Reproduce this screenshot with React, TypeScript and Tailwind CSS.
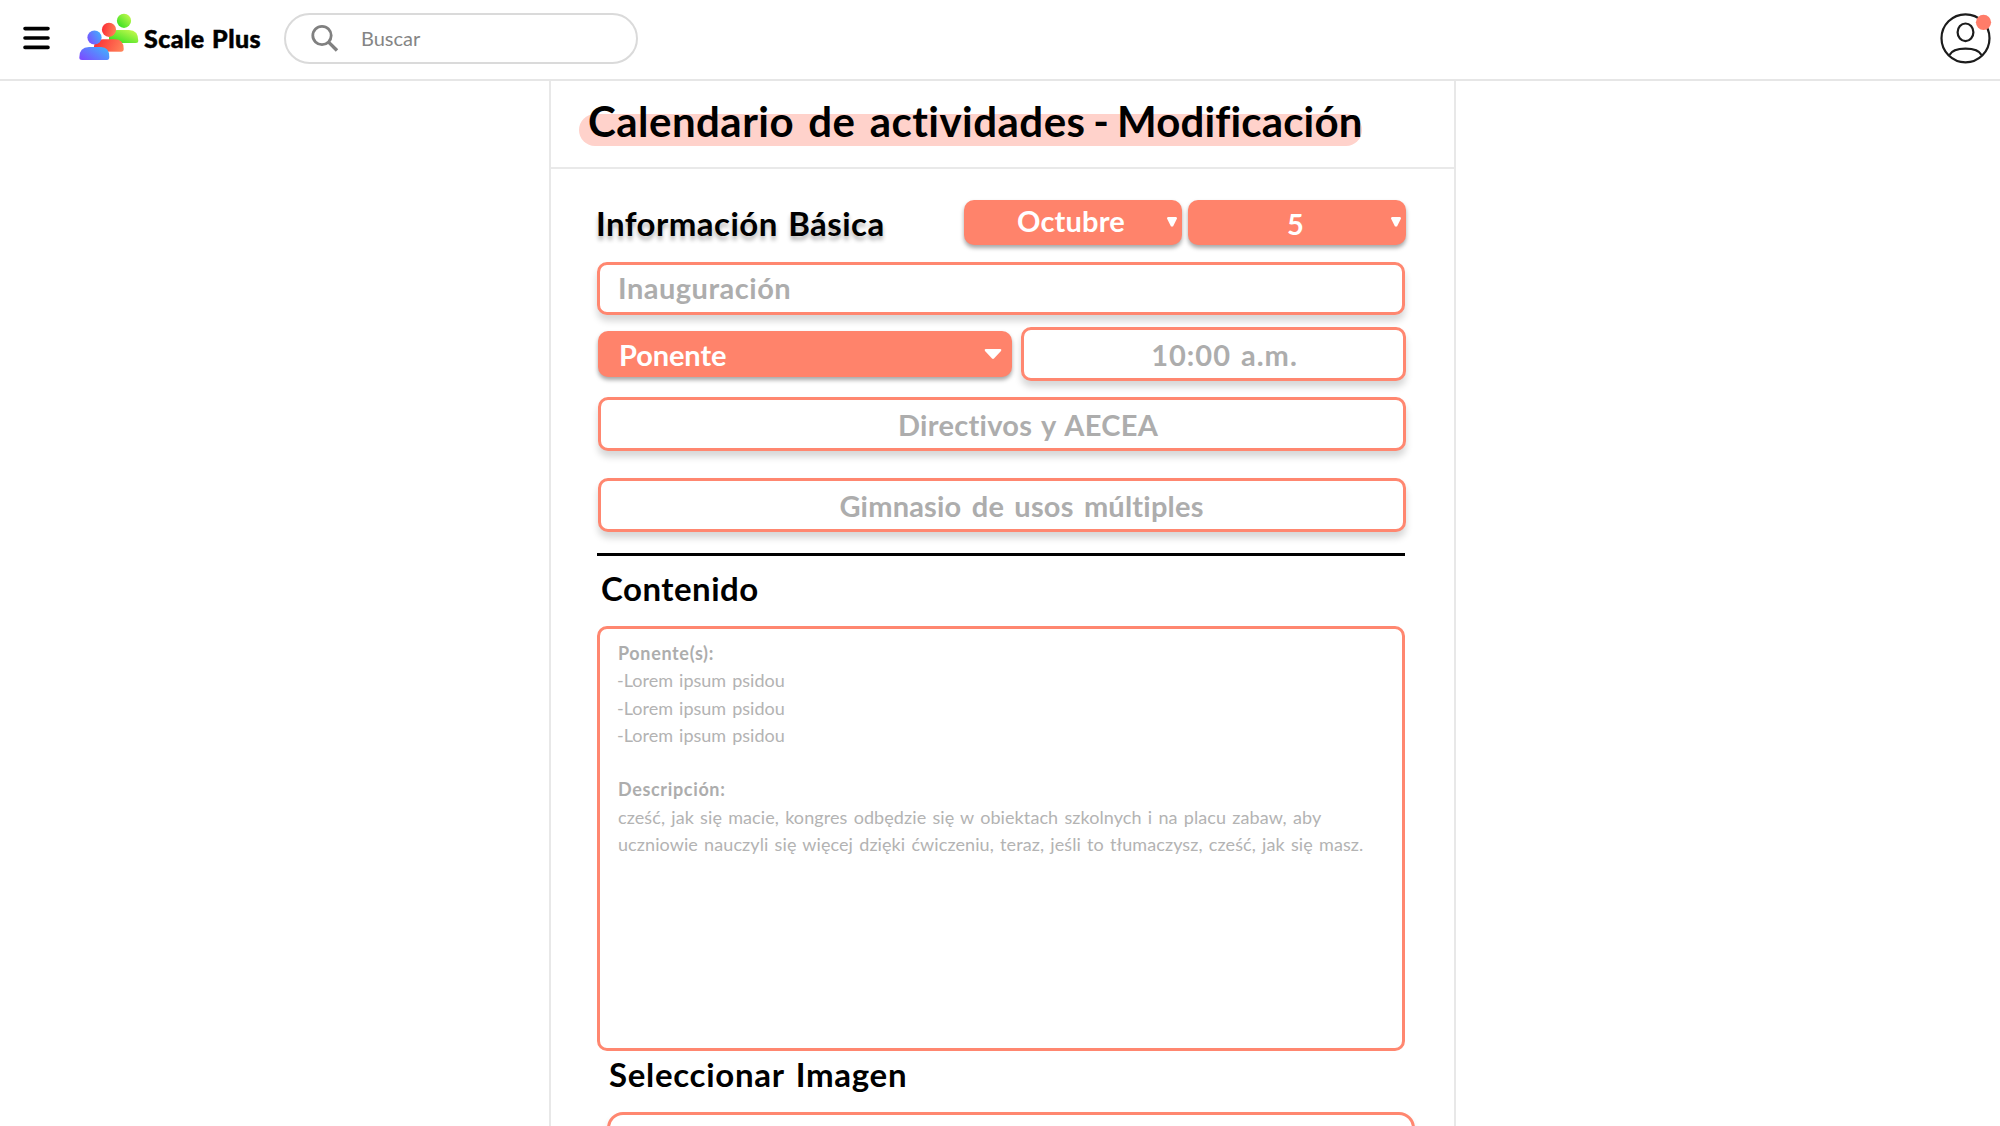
import type { ReactNode } from "react";

const field =
  "flex items-center rounded-[10px] border-[3px] border-[#ff8770] bg-white text-[29px] font-bold leading-[36px] text-[#adadad] shadow-[0_6px_7px_rgba(0,0,0,0.16)]";
const select =
  "relative flex items-center rounded-[10px] bg-[#ff836b] text-[29px] font-bold leading-[36px] text-white shadow-[0_3px_4px_rgba(0,0,0,0.35)]";
const heading = "text-[33px] font-bold leading-[40px] text-black";

function MenuIcon() {
  return (
    <svg className="ml-[23px] h-[24px] w-[27px]" viewBox="0 0 27 24" stroke="#000" strokeWidth="3.6" strokeLinecap="round">
      <path d="M2 2.6H25M2 12H25M2 21.4H25" />
    </svg>
  );
}

function Logo() {
  return (
    <svg className="ml-[29px] h-[48px] w-[60px]" viewBox="0 0 60 48">
      <defs>
        <linearGradient id="green" x1="0" y1="1" x2="1" y2="0">
          <stop offset="0" stopColor="#22dd1c" />
          <stop offset="1" stopColor="#d3fb52" />
        </linearGradient>
        <linearGradient id="red" x1="0" y1="0.4" x2="1" y2="0.6">
          <stop offset="0" stopColor="#fb2e36" />
          <stop offset="1" stopColor="#ff8258" />
        </linearGradient>
        <linearGradient id="blue" x1="0" y1="0.8" x2="1" y2="0.2">
          <stop offset="0" stopColor="#7b4dff" />
          <stop offset="1" stopColor="#42b0fd" />
        </linearGradient>
      </defs>
      <circle cx="45" cy="7.8" r="7.1" fill="url(#green)" />
      <path d="M30 30V24Q31 17 38 17H50Q59.300 17 59.300 28Q59.300 30 57 30Z" fill="url(#green)" />
      <circle cx="30" cy="16.800" r="7.100" fill="url(#red)" />
      <path d="M15 38.500V33Q16 26.300 24 26.300H36Q44.700 26.300 44.700 36Q44.700 38.700 42 38.700Z" fill="url(#red)" />
      <circle cx="15.500" cy="24.500" r="7.100" fill="url(#blue)" />
      <path d="M0.300 44.500Q0.300 34 10 34H22Q30.300 34 30.300 44Q30.300 47 28 47H3Q0.300 47 0.300 44.500Z" fill="url(#blue)" />
    </svg>
  );
}

function SearchIcon() {
  return (
    <svg className="ml-[24px] h-[30px] w-[30px]" viewBox="0 0 30 30" fill="none" stroke="#808080">
      <circle cx="12" cy="12.500" r="9.200" strokeWidth="2.800" />
      <path d="M18.600 19.100L27 27.500" strokeWidth="3.400" />
    </svg>
  );
}

function Avatar() {
  return (
    <svg className="mr-[8px] h-[52px] w-[54px]" viewBox="0 0 54 52" fill="none" stroke="#1c1c1c" strokeWidth="2.200">
      <circle cx="27.500" cy="26.300" r="24" />
      <ellipse cx="27.500" cy="20.300" rx="7.900" ry="8.800" />
      <path d="M11.500 43Q14.500 36.600 27.500 36.600T43.500 43" />
      <circle cx="45.500" cy="10.300" r="7.600" fill="#ff7c69" stroke="none" />
    </svg>
  );
}

function SmallCaret() {
  return (
    <svg className="absolute right-[5px] top-[17px] h-[10px] w-[10px]" viewBox="0 0 10 10" fill="#fff">
      <path d="M0.600 0H9.400L10 1.500L6 9.500H4L0 1.500Z" />
    </svg>
  );
}

function Line({ bold, tight, children }: { bold?: boolean; tight?: boolean; children?: ReactNode }) {
  const style = bold
    ? "font-bold tracking-[0.650px]"
    : tight
      ? "-ml-px text-[#b3b3b3] tracking-[0px] [word-spacing:1.500px]"
      : "text-[#b3b3b3] tracking-[0.085px] [word-spacing:1.500px]";
  return <p className={"h-[27.300px] whitespace-pre " + style}>{children}</p>;
}

export default function App() {
  return (
    <div className="flex h-[1126px] w-[2000px] flex-col overflow-hidden bg-white font-['Lato',sans-serif]">
      <header className="flex h-[81px] shrink-0 items-start border-b-2 border-[#e6e6e6]">
        <div className="flex h-[76px] w-full items-center">
          <MenuIcon />
          <div className="-mt-[3px]">
            <Logo />
          </div>
          <span className="ml-[5px] w-[136px] whitespace-nowrap text-[25px] font-black leading-[30px] tracking-[0.450px] text-black [-webkit-text-stroke:0.500px_#000] [word-spacing:1px]">
            Scale Plus
          </span>
          <div className="ml-[4px] flex h-[51px] w-[354px] items-center rounded-full border-2 border-[#dadada]">
            <SearchIcon />
            <span className="ml-[21px] text-[20px] leading-[24px] text-[#858585]">Buscar</span>
          </div>
          <div className="ml-auto">
            <Avatar />
          </div>
        </div>
      </header>

      <main className="ml-[549px] flex w-[907px] grow flex-col border-x-2 border-[#e8e8e8]">
        <div className="flex h-[88px] shrink-0 border-b-2 border-[#e9e9e9] pl-[28px] pt-[16px]">
          <h1 className="relative isolate h-[48px] w-[783px] whitespace-nowrap pl-[9px] text-[42px] font-bold leading-[48px] tracking-[0.150px] text-black">
            <span className="absolute left-0 top-[17px] -z-10 h-[32px] w-[783px] rounded-full bg-[#ffd2cb]" />
            <span className="tracking-[0.480px] [word-spacing:3.500px]">Calendario de actividades</span>
            <span className="[word-spacing:-2.500px]"> - </span>
            Modificación
          </h1>
        </div>

        <div className="flex flex-col pl-[46px] pt-[31px]">
          <div className="flex h-[45px] items-center">
            <h2 className={heading + " -ml-px w-[368px] tracking-[0.450px] [text-shadow:0_4px_4px_rgba(0,0,0,0.3)] [word-spacing:2px]"}>
              Información Básica
            </h2>
            <div className={select + " h-[45px] w-[218px] justify-center pb-[4px] pr-[4px] tracking-[0.200px]"}>
              Octubre
              <SmallCaret />
            </div>
            <div className={select + " ml-[6px] h-[45px] w-[218px] justify-center pr-[3px] pt-[2px]"}>
              5
              <SmallCaret />
            </div>
          </div>

          <div className={field + " mt-[17px] h-[53px] w-[808px] pb-px pl-[18px] tracking-[0.500px]"}>Inauguración</div>

          <div className="mt-[12px] flex h-[54px]">
            <div className={select + " ml-px mt-[4px] h-[46px] w-[414px] pl-[21px] pt-[2px] tracking-[-0.100px]"}>
              Ponente
              <svg className="absolute right-[10px] top-[17px] h-[12px] w-[18px]" viewBox="0 0 18 12" fill="#fff">
                <path d="M1.500 1H16.500Q18 1.500 17 3L10 10.500Q9 11.300 8 10.500L1 3Q0 1.500 1.500 1Z" />
              </svg>
            </div>
            <div className={field + " ml-[9px] h-[54px] w-[385px] justify-center pl-[22px] pt-[2px] tracking-[1px] [word-spacing:2px]"}>
              10:00 a.m.
            </div>
          </div>

          <div className={field + " ml-px mt-[16px] h-[54px] w-[808px] justify-center pl-[52px] pt-px tracking-[0.300px] [word-spacing:2px]"}>
            Directivos y AECEA
          </div>
          <div className={field + " ml-px mt-[27px] h-[54px] w-[808px] justify-center pl-[39px] pt-px tracking-[0.200px] [word-spacing:3px]"}>
            Gimnasio de usos múltiples
          </div>

          <hr className="mt-[21px] h-[3px] w-[808px] border-0 bg-black" />

          <h2 className={heading + " ml-[4px] mt-[12px] tracking-[0.500px]"}>Contenido</h2>

          <div className="mt-[18px] h-[425px] w-[808px] rounded-[10px] border-[3px] border-[#ff8770] pl-[18px] pt-[11px] text-[18px] leading-[27.300px] text-[#adadad]">
            <Line bold>Ponente(s):</Line>
            <Line tight>-Lorem ipsum psidou</Line>
            <Line tight>-Lorem ipsum psidou</Line>
            <Line tight>-Lorem ipsum psidou</Line>
            <Line />
            <Line bold>Descripción:</Line>
            <Line>cześć, jak się macie, kongres odbędzie się w obiektach szkolnych i na placu zabaw, aby</Line>
            <Line>uczniowie nauczyli się więcej dzięki ćwiczeniu, teraz, jeśli to tłumaczysz, cześć, jak się masz.</Line>
          </div>

          <h2 className={heading + " ml-[12px] mt-[3px] tracking-[0.700px] [word-spacing:3px]"}>Seleccionar Imagen</h2>

          <div className="ml-[10px] mt-[18px] h-[60px] w-[808px] rounded-[16px] border-[3px] border-[#ff8770] shadow-[0_6px_7px_rgba(0,0,0,0.16)]" />
        </div>
      </main>
    </div>
  );
}
